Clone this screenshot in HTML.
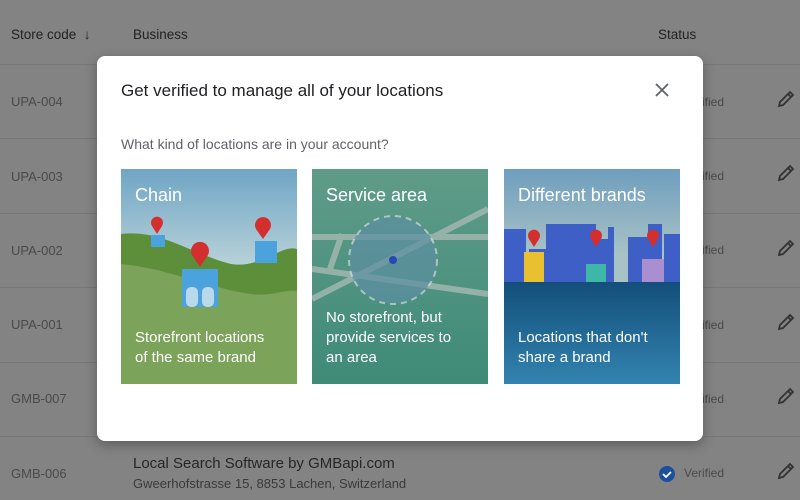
<!DOCTYPE html>
<html><head><meta charset="utf-8"><style>
*{margin:0;padding:0;box-sizing:border-box}
body{width:800px;height:500px;overflow:hidden;background:#838383;font-family:"Liberation Sans",sans-serif;position:relative}
.a{position:absolute;white-space:nowrap}
.h{font-size:13.5px;color:#222;top:27px}
.code{left:11px;font-size:13px;color:#4a4a4a}
.ln{position:absolute;left:0;width:800px;height:1px;background:#767676}
.ver{left:684px;font-size:12px;color:#4a4a4a}
.pen{position:absolute;left:776px}
#dlg{position:absolute;left:97px;top:56px;width:606px;height:385px;background:#fff;border-radius:8px;box-shadow:0 4px 12px rgba(0,0,0,.3)}
.card{position:absolute;top:113px;width:176px;height:215px;overflow:hidden;color:#fff}
.card .t{position:absolute;left:14px;top:16px;font-size:18px}
.card .d{position:absolute;left:14px;bottom:16px;width:148px;font-size:15px;line-height:20px;white-space:normal}
.card svg{position:absolute;left:0;top:0}
</style></head><body>
<div class="a h" style="left:11px">Store code&nbsp;&nbsp;↓</div>
<div class="a h" style="left:133px">Business</div>
<div class="a h" style="left:658px">Status</div>
<div class="ln" style="top:64px"></div>
<div class="ln" style="top:138px"></div>
<div class="ln" style="top:213px"></div>
<div class="ln" style="top:287px"></div>
<div class="ln" style="top:362px"></div>
<div class="ln" style="top:436px"></div>
<div class="a code" style="top:94px">UPA-004</div>
<div class="a code" style="top:169px">UPA-003</div>
<div class="a code" style="top:243px">UPA-002</div>
<div class="a code" style="top:317px">UPA-001</div>
<div class="a code" style="top:391px">GMB-007</div>
<div class="a code" style="top:466px">GMB-006</div>
<div class="a ver" style="top:95px">Verified</div>
<div class="a ver" style="top:169px">Verified</div>
<div class="a ver" style="top:243px">Verified</div>
<div class="a ver" style="top:318px">Verified</div>
<div class="a ver" style="top:392px">Verified</div>
<div class="a ver" style="top:466px">Verified</div>
<svg class="a" style="left:658px;top:465px" width="18" height="18" viewBox="0 0 18 18"><circle cx="9" cy="9" r="8" fill="#1c4f9c"/><path d="M5 9l3 3 5-5" stroke="#fff" stroke-width="1.8" fill="none"/></svg>
<div class="a" style="left:133px;top:455px;font-size:15px;color:#262626">Local Search Software by GMBapi.com</div>
<div class="a" style="left:133px;top:476px;font-size:13px;color:#3a3a3a">Gweerhofstrasse 15, 8853 Lachen, Switzerland</div>
<svg class="pen" style="top:89px" width="20" height="20" viewBox="0 0 20 20"><path d="M3 17l1-4L14 3l3 3L7 16z M12 5l3 3" stroke="#333" stroke-width="1.8" fill="none"/></svg>
<svg class="pen" style="top:163px" width="20" height="20" viewBox="0 0 20 20"><path d="M3 17l1-4L14 3l3 3L7 16z M12 5l3 3" stroke="#333" stroke-width="1.8" fill="none"/></svg>
<svg class="pen" style="top:238px" width="20" height="20" viewBox="0 0 20 20"><path d="M3 17l1-4L14 3l3 3L7 16z M12 5l3 3" stroke="#333" stroke-width="1.8" fill="none"/></svg>
<svg class="pen" style="top:312px" width="20" height="20" viewBox="0 0 20 20"><path d="M3 17l1-4L14 3l3 3L7 16z M12 5l3 3" stroke="#333" stroke-width="1.8" fill="none"/></svg>
<svg class="pen" style="top:386px" width="20" height="20" viewBox="0 0 20 20"><path d="M3 17l1-4L14 3l3 3L7 16z M12 5l3 3" stroke="#333" stroke-width="1.8" fill="none"/></svg>
<svg class="pen" style="top:461px" width="20" height="20" viewBox="0 0 20 20"><path d="M3 17l1-4L14 3l3 3L7 16z M12 5l3 3" stroke="#333" stroke-width="1.8" fill="none"/></svg>

<div id="dlg">
<div class="a" style="left:24px;top:25px;font-size:17px;color:#202124">Get verified to manage all of your locations</div>
<svg class="a" style="left:558px;top:27px" width="14" height="14" viewBox="0 0 14 14"><path d="M1 1l12 12M13 1L1 13" stroke="#5f6368" stroke-width="1.8"/></svg>
<div class="a" style="left:24px;top:80px;font-size:14px;color:#5f6368">What kind of locations are in your account?</div>

<div class="card" style="left:24px;background:linear-gradient(#6fa5c5,#b8d2d8 45%)">
<svg width="176" height="215"><path d="M0 65 C40 60,70 85,110 95 C140 100,160 75,176 80 L176 215 L0 215z" fill="#5d8f3a"/><path d="M0 95 C50 100,90 120,130 125 C150 128,165 120,176 122 L176 215 L0 215z" fill="#7ba35a"/>
<rect x="30" y="66" width="14" height="12" fill="#4aa3dc"/><rect x="134" y="72" width="22" height="22" fill="#4aa3dc"/><rect x="61" y="100" width="36" height="38" fill="#4aa3dc"/>
<rect x="65" y="118" width="12" height="20" rx="5" fill="#b9d8ea"/><rect x="81" y="118" width="12" height="20" rx="5" fill="#b9d8ea"/>
<g fill="#d32f2f"><path d="M36 65 l-5-8 a6 6 0 1 1 10 0z"/><path d="M142 70 l-7-10 a8 8 0 1 1 14 0z"/><path d="M79 98 l-8-12 a9 9 0 1 1 16 0z"/></g></svg>
<div class="t">Chain</div><div class="d" style="width:145px">Storefront locations<br>of the same brand</div></div>

<div class="card" style="left:215px;background:linear-gradient(#5f9c88,#3f8a78)">
<svg width="176" height="215"><g stroke="#a6b9b2" stroke-width="6" opacity=".8" fill="none"><path d="M0 68 L176 68"/><path d="M0 100 L176 125"/><path d="M0 130 L176 40"/><path d="M30 65 L18 100"/></g>
<circle cx="81" cy="91" r="44" fill="#5d8fa3" opacity=".7" stroke="#d0dcd8" stroke-width="2" stroke-dasharray="6 5"/><circle cx="81" cy="91" r="4" fill="#2846b8"/></svg>
<div class="t">Service area</div><div class="d" style="width:150px;bottom:16px">No storefront, but<br>provide services to<br>an area</div></div>

<div class="card" style="left:407px;background:linear-gradient(#6e9ebd,#a9c2c6 40%)">
<svg width="176" height="215"><path d="M0 60h22v53H0z M42 55h50v58H42z M92 70h12v43H92z M104 58h6v55h-6z M124 68h20v45h-20z M144 55h14v58h-14z M160 65h16v48h-16z M25 80h65v33H25z M60 75h20v38H60z" fill="#3d5fc6"/>
<rect x="20" y="83" width="20" height="30" fill="#e8c030"/><rect x="82" y="95" width="20" height="18" fill="#3fb7a8"/><rect x="138" y="90" width="22" height="23" fill="#a98ed0"/>
<g fill="#d32f2f"><path d="M30 78 l-5-8 a6 6 0 1 1 10 0z"/><path d="M92 78 l-5-8 a6 6 0 1 1 10 0z"/><path d="M149 78 l-5-8 a6 6 0 1 1 10 0z"/></g>
<rect x="0" y="113" width="176" height="102" fill="url(#g)"/><defs><linearGradient id="g" x1="0" y1="0" x2="0" y2="1"><stop offset="0" stop-color="#134f7a"/><stop offset="1" stop-color="#3383b0"/></linearGradient></defs></svg>
<div class="t">Different brands</div><div class="d">Locations that don't<br>share a brand</div></div>
</div>
</body></html>
